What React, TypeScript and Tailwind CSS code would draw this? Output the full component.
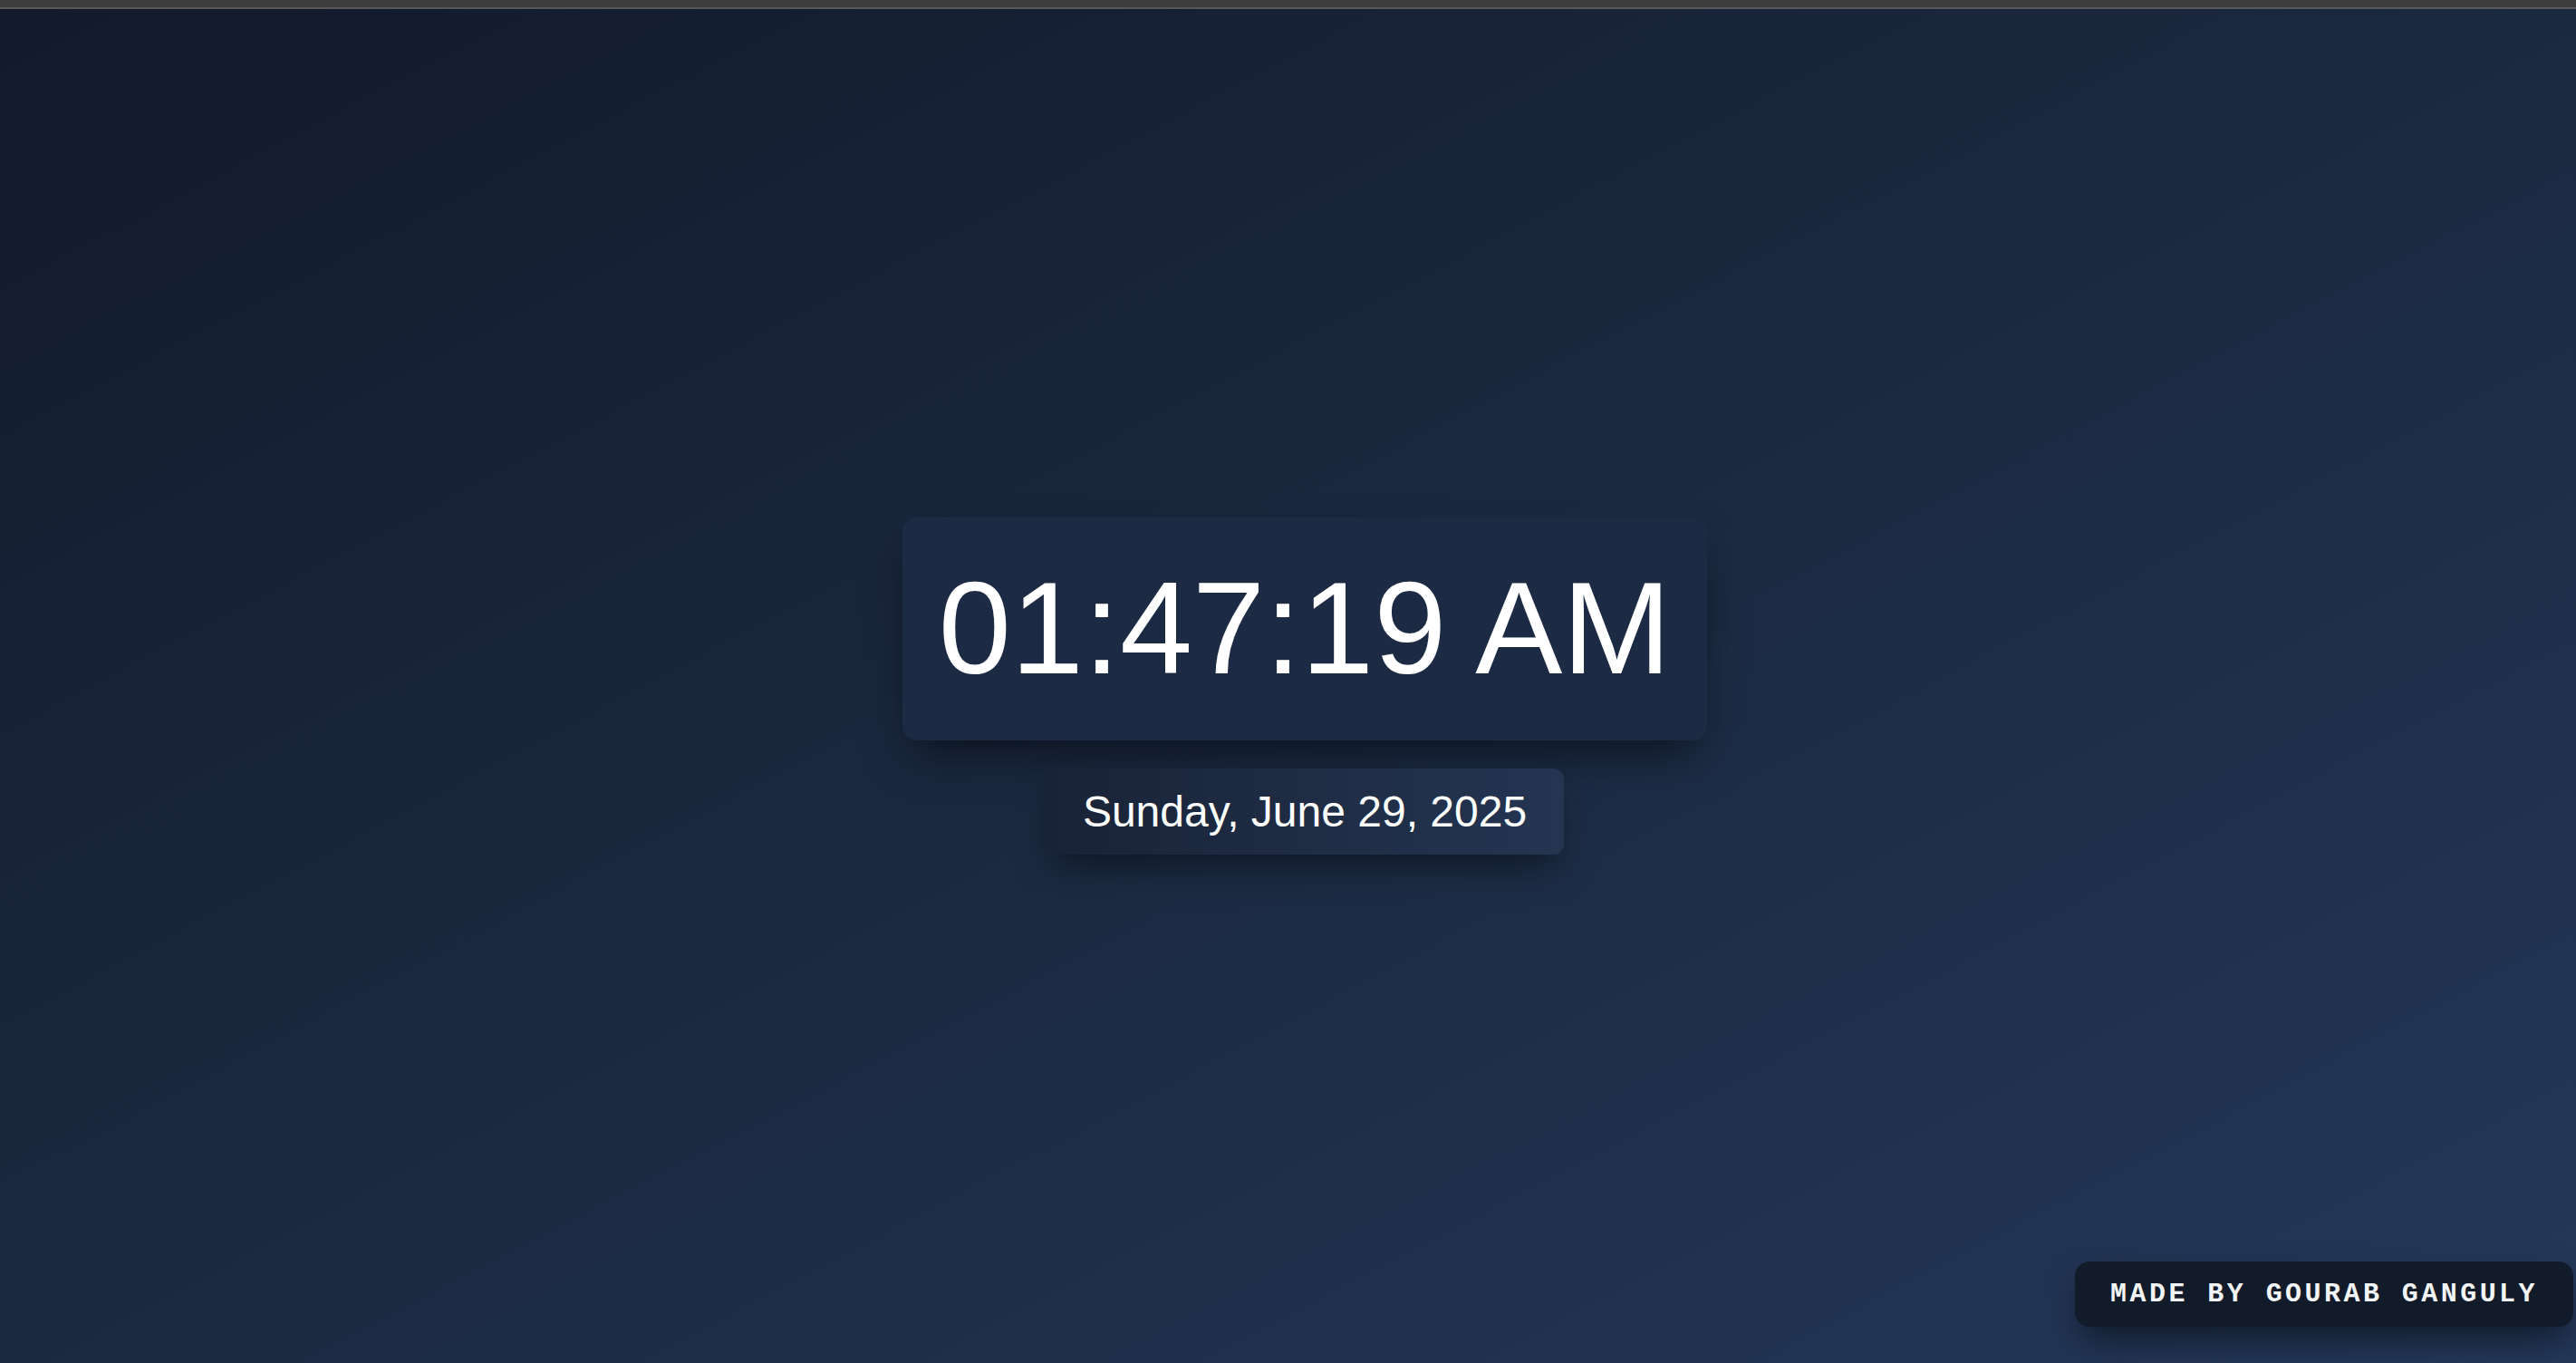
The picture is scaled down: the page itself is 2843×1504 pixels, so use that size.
import { useEffect, useState } from 'react';

// fixed moment shown in the screenshot
const START = new Date(2025, 5, 29, 1, 47, 19);

export default function App() {
  const [now] = useState(START);

  useEffect(() => {
    // clock is frozen for the picture
  }, []);

  const time = now.toLocaleTimeString('en-US', {
    hour: '2-digit',
    minute: '2-digit',
    second: '2-digit',
    hour12: true,
  });
  const date = now.toLocaleDateString('en-US', {
    weekday: 'long',
    year: 'numeric',
    month: 'long',
    day: 'numeric',
  });

  return (
    <div className="w-full h-[1504px] flex flex-col overflow-hidden">
      {/* browser-ish top strip */}
      <div className="h-[8px] bg-[#3d3d3d] shrink-0" />
      <div className="h-[2px] bg-[#585858] shrink-0" />

      <main className="relative flex-1 flex flex-col items-center justify-center pl-[37px] bg-gradient-to-br from-[#121a2b] via-[#1b2940] to-[#24385a]">
        <div className="rounded-2xl bg-[#1c2a43] px-[40px] py-[40px] shadow-[0_25px_50px_-12px_rgba(0,0,0,0.55)]">
          <h1 className="text-[144px] leading-[normal] text-white font-['Liberation_Sans',Arial,sans-serif] whitespace-nowrap">
            {time}
          </h1>
        </div>

        <div className="mt-[31px] rounded-xl bg-gradient-to-r from-[#192337] to-[#243552] px-[41px] py-[20px] shadow-[0_20px_40px_-10px_rgba(0,0,0,0.5)]">
          <p className="text-[48px] leading-[normal] text-white font-['Liberation_Sans',Arial,sans-serif] whitespace-nowrap">
            {date}
          </p>
        </div>

        {/* credit badge */}
        <div className="absolute bottom-[40px] right-[3px] rounded-2xl bg-[#121b29] px-[39px] py-[19px] shadow-[0_20px_40px_-8px_rgba(0,0,0,0.55)]">
          <span className="text-[30px] leading-[normal] font-bold tracking-[0.115em] uppercase text-[#f3f4f6] font-['Liberation_Mono','DejaVu_Sans_Mono',monospace] whitespace-nowrap">
            Made by Gourab Ganguly
          </span>
        </div>
      </main>
    </div>
  );
}
